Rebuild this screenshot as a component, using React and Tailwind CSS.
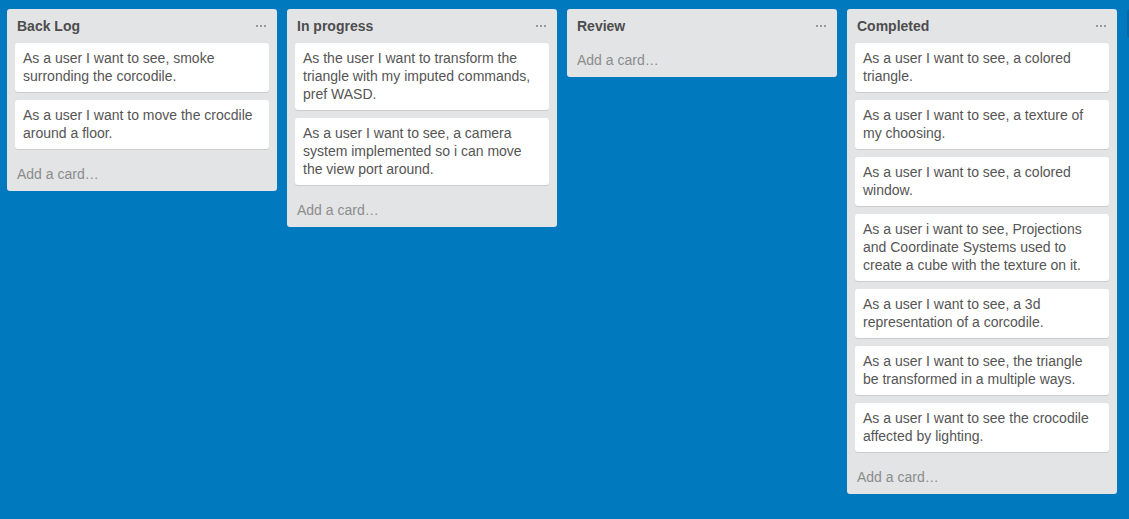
import React from 'react';

const lists = [
  {
    title: 'Back Log',
    cards: [
      'As a user I want to see, smoke surronding the corcodile.',
      'As a user I want to move the crocdile around a floor.',
    ],
  },
  {
    title: 'In progress',
    cards: [
      'As the user I want to transform the triangle with my imputed commands, pref WASD.',
      'As a user I want to see, a camera system implemented so i can move the view port around.',
    ],
  },
  { title: 'Review', cards: [] },
  {
    title: 'Completed',
    cards: [
      'As a user I want to see, a colored triangle.',
      'As a user I want to see, a texture of my choosing.',
      'As a user I want to see, a colored window.',
      'As a user i want to see, Projections and Coordinate Systems used to create a cube with the texture on it.',
      'As a user I want to see, a 3d representation of a corcodile.',
      'As a user I want to see, the triangle be transformed in a multiple ways.',
      'As a user I want to see the crocodile affected by lighting.',
    ],
  },
];

const List = ({ title, cards }) => (
  <div className="w-[270px] shrink-0 rounded-[3px] bg-[#e2e4e6]">
    <div className="flex items-center justify-between pl-[10px] pr-[11px] py-[8px]">
      <h2 className="text-[14px] leading-[18px] font-bold text-[#4d4d4d]">{title}</h2>
      <div className="flex gap-[2px]">
        <span className="w-[2px] h-[2px] bg-[#999]" />
        <span className="w-[2px] h-[2px] bg-[#999]" />
        <span className="w-[2px] h-[2px] bg-[#999]" />
      </div>
    </div>
    {cards.length > 0 && (
      <div className="flex flex-col gap-[8px] px-[8px] pb-[8px]">
        {cards.map((c, i) => (
          <div
            key={i}
            className="bg-white rounded-[3px] shadow-[0_1px_0_#ccc] px-[8px] pt-[6px] pb-[7px] text-[14px] leading-[18px] text-[#555]"
          >
            {c}
          </div>
        ))}
      </div>
    )}
    <div className="px-[10px] py-[8px] text-[14px] leading-[18px] text-[#8c8c8c]">Add a card…</div>
  </div>
);

export default function App() {
  return (
    <div
      className="min-h-screen w-full overflow-hidden bg-[#0079bf] flex items-start gap-[10px] pl-[7px] pt-[9px]"
      style={{ fontFamily: '"Liberation Sans", Arial, sans-serif' }}
    >
      {lists.map((l) => (
        <List key={l.title} {...l} />
      ))}
      <div className="w-[270px] h-[29px] shrink-0 rounded-[3px] bg-[#006aa8]" />
    </div>
  );
}
